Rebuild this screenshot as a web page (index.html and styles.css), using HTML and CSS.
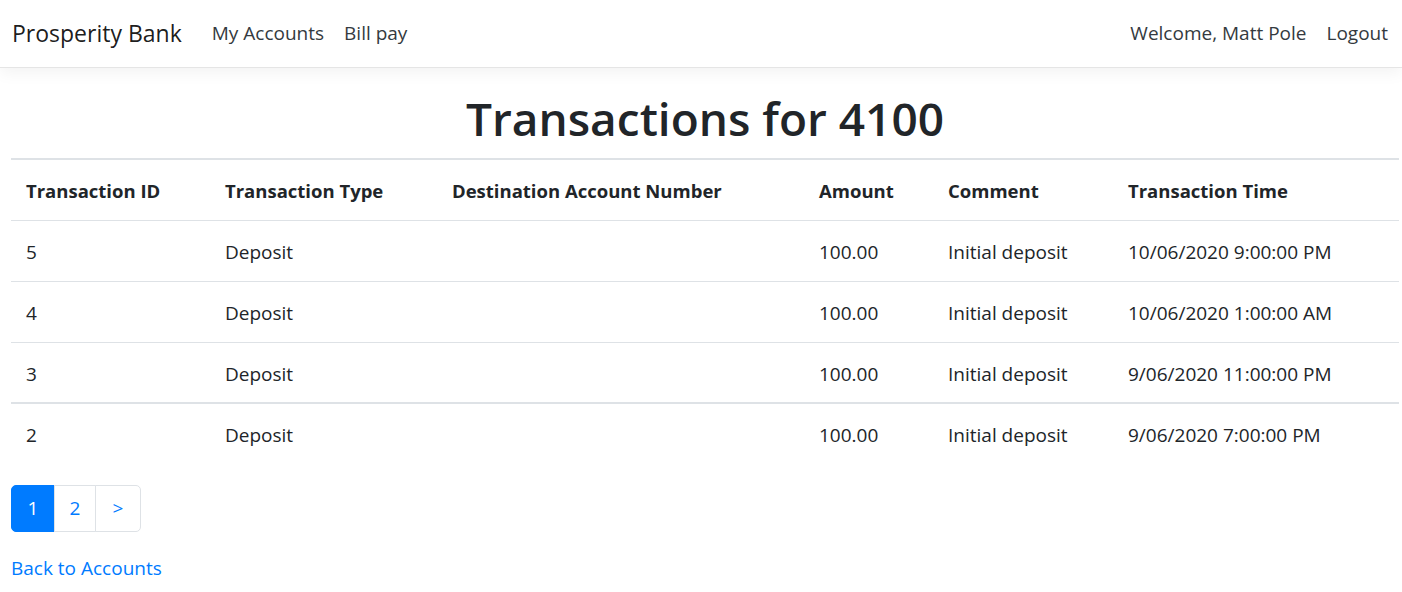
FILE: index.html
```html
<!DOCTYPE html>
<html lang="en">
<head>
<meta charset="utf-8">
<title>Transactions - Prosperity Bank</title>
<link rel="stylesheet" href="styles.css">
</head>
<body>
<header class="navbar">
  <a class="brand" href="#">Prosperity Bank</a>
  <nav class="nav-left">
    <a class="nav-link" href="#">My Accounts</a>
    <a class="nav-link" href="#">Bill pay</a>
  </nav>
  <nav class="nav-right">
    <span class="nav-link">Welcome, Matt Pole</span>
    <a class="nav-link" href="#">Logout</a>
  </nav>
</header>
<main class="content">
  <h1 class="title">Transactions for 4100</h1>
  <table class="table">
    <colgroup>
      <col class="c1"><col class="c2"><col class="c3"><col class="c4"><col class="c5"><col class="c6">
    </colgroup>
    <thead>
      <tr>
        <th>Transaction ID</th>
        <th>Transaction Type</th>
        <th>Destination Account Number</th>
        <th>Amount</th>
        <th>Comment</th>
        <th>Transaction Time</th>
      </tr>
    </thead>
    <tbody>
      <tr><td>5</td><td>Deposit</td><td></td><td>100.00</td><td>Initial deposit</td><td>10/06/2020 9:00:00 PM</td></tr>
      <tr><td>4</td><td>Deposit</td><td></td><td>100.00</td><td>Initial deposit</td><td>10/06/2020 1:00:00 AM</td></tr>
      <tr><td>3</td><td>Deposit</td><td></td><td>100.00</td><td>Initial deposit</td><td>9/06/2020 11:00:00 PM</td></tr>
    </tbody>
    <tbody class="tbody-next">
      <tr><td>2</td><td>Deposit</td><td></td><td>100.00</td><td>Initial deposit</td><td>9/06/2020 7:00:00 PM</td></tr>
    </tbody>
  </table>
  <ul class="pagination">
    <li class="page active"><span>1</span></li>
    <li class="page"><a href="#">2</a></li>
    <li class="page page-next"><a href="#">&gt;</a></li>
  </ul>
  <a class="back-link" href="#">Back to Accounts</a>
</main>
</body>
</html>
```

FILE: styles.css
```css
* { box-sizing: border-box; }
html, body { margin: 0; padding: 0; }
body {
  font-family: "Open Sans", "Noto Sans", sans-serif;
  font-size: 19px;
  line-height: 1.5;
  color: #212529;
  background: #fff;
}
a { text-decoration: none; }

.navbar {
  display: flex;
  align-items: center;
  height: 68px;
  padding: 0 4px 1px 12px;
  border-bottom: 1px solid #e5e5e5;
  box-shadow: 0 5px 15px rgba(0, 0, 0, 0.05);
  background: #fff;
}
.brand {
  font-size: 23px;
  color: rgba(0, 0, 0, 0.9);
  margin-right: 20px;
  white-space: nowrap;
}
.nav-left, .nav-right { display: flex; }
.nav-right { margin-left: auto; }
.nav-link {
  padding: 0 10px;
  font-size: 19px;
  color: #343a40;
  white-space: nowrap;
}

.content { padding: 20px 3px 0 11px; }
.title {
  margin: 0 0 10px;
  font-size: 46px;
  font-weight: 600;
  line-height: 60px;
  text-align: center;
}

.table {
  width: 100%;
  border-collapse: collapse;
  table-layout: fixed;
  margin-bottom: 20px;
}
.c1 { width: 199px; }
.c2 { width: 227px; }
.c3 { width: 367px; }
.c4 { width: 129px; }
.c5 { width: 180px; }
.c6 { width: 286px; }
.table th, .table td {
  height: 61px;
  padding: 2px 15px 0;
  text-align: left;
  vertical-align: middle;
  border-top: 1px solid #dee2e6;
  white-space: nowrap;
}
.table td { padding-top: 3px; }
.table th { font-size: 18.5px; }
.table thead th {
  border-top: 2px solid #dee2e6;
  font-weight: 700;
}
.table .tbody-next td { border-top: 2px solid #dee2e6; }

.pagination {
  display: flex;
  list-style: none;
  margin: 0 0 20px;
  padding: 1px 0 0;
}
.page a, .page span {
  display: block;
  min-width: 42px;
  height: 47px;
  line-height: 45px;
  padding: 0 12px;
  text-align: center;
  border: 1px solid #dee2e6;
  margin-left: -1px;
  color: #007bff;
  background: #fff;
}
.page:first-child a, .page:first-child span {
  margin-left: 0;
  min-width: 44px;
  border-radius: 5px 0 0 5px;
}
.page.page-next a { min-width: 46px; }
.page:last-child a { border-radius: 0 5px 5px 0; }
.page.active span {
  background: #007bff;
  border-color: #007bff;
  color: #fff;
}

.back-link {
  display: inline-block;
  color: #007bff;
  line-height: 30px;
  margin-top: 1px;
}
```
